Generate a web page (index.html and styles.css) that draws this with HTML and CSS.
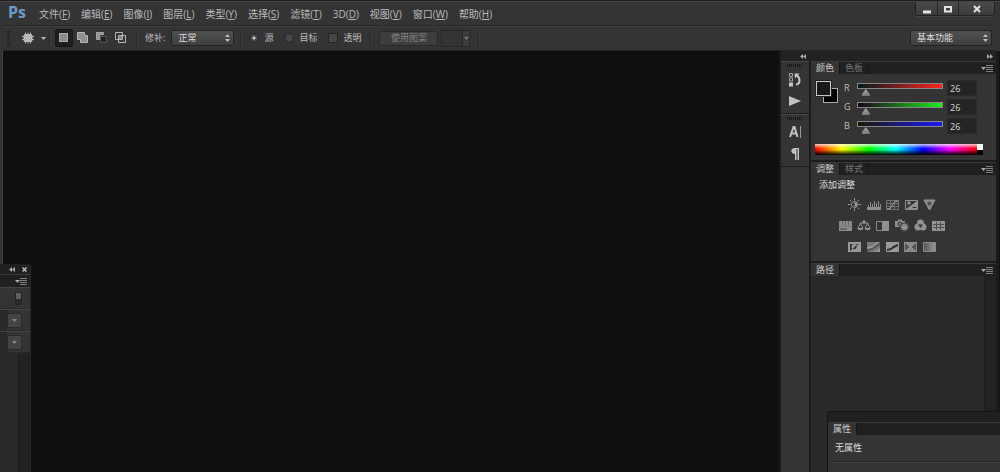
FILE: index.html
```html
<!DOCTYPE html>
<html lang="zh-CN">
<head>
<meta charset="utf-8">
<title>Ps</title>
<link rel="stylesheet" href="styles.css">
</head>
<body>
<div class="app">
  <header class="titlebar">
    <div class="logo">Ps</div>
    <nav class="menu">
      <a href="#">文件(<u>F</u>)</a>
      <a href="#">编辑(<u>E</u>)</a>
      <a href="#">图像(<u>I</u>)</a>
      <a href="#">图层(<u>L</u>)</a>
      <a href="#">类型(<u>Y</u>)</a>
      <a href="#">选择(<u>S</u>)</a>
      <a href="#">滤镜(<u>T</u>)</a>
      <a href="#">3D(<u>D</u>)</a>
      <a href="#">视图(<u>V</u>)</a>
      <a href="#">窗口(<u>W</u>)</a>
      <a href="#">帮助(<u>H</u>)</a>
    </nav>
    <div class="window-buttons">
      <button type="button" aria-label="最小化"><svg width="10" height="10"><path d="M1 6.500h8v3h-8z" fill="#e2e2e2"/></svg></button>
      <button type="button" aria-label="最大化"><svg width="10" height="10"><path d="M2 3h6v4.500h-6z" fill="none" stroke="#e2e2e2" stroke-width="2"/></svg></button>
      <button type="button" aria-label="关闭" class="close"><svg width="10" height="10"><path d="M2 2l6 6M8 2l-6 6" stroke="#e2e2e2" stroke-width="2"/></svg></button>
    </div>
  </header>

  <div class="options">
    <span class="grip-v"></span>
    <button type="button" class="icon-button tool" aria-label="修补工具">
      <svg width="14" height="12" viewBox="0 0 14 12"><rect x="2.500" y="2" width="9" height="8" rx="2" fill="#c4c4c4"/><path d="M4.500 .5v11M7 .5v11M9.500 .5v11M1 4.500h12M1 7.500h12" stroke="#b0b0b0"/></svg>
      <svg width="5" height="3"><path d="M0 0h5l-2.500 3z" fill="#bbb"/></svg>
    </button>
    <span class="separator"></span>
    <div class="modes">
      <button type="button" class="icon-button active" aria-label="新选区"><svg width="12" height="12"><rect x="1.500" y="1.500" width="8" height="8" fill="#8b8b8b" stroke="#aaa"/></svg></button>
      <button type="button" class="icon-button" aria-label="添加到选区"><svg width="12" height="12"><path d="M.5 .5h7v3h3v7h-7v-3h-3z" fill="#909090" stroke="#b5b5b5"/></svg></button>
      <button type="button" class="icon-button" aria-label="从选区减去"><svg width="12" height="12"><path d="M.5 .5h7v2h-4v5h-3z" fill="#909090" stroke="#a5a5a5"/><path d="M4.500 4.500h6v6h-6z" fill="#222" stroke="#555"/></svg></button>
      <button type="button" class="icon-button" aria-label="与选区交叉"><svg width="12" height="12"><path d="M.5 .5h7v7h-7zM3.500 3.500h7v7h-7z" fill="none" stroke="#b5b5b5"/><path d="M4 4h3v3h-3z" fill="#888"/></svg></button>
    </div>
    <span class="separator"></span>
    <label class="field">修补:
      <span class="select-wrap"><select><option>正常</option></select><svg width="5" height="8"><path d="M0 3l2.500-3 2.500 3zM0 5h5l-2.500 3z" fill="#bbb"/></svg></span>
    </label>
    <span class="separator"></span>
    <div class="choices">
      <label><input type="radio" name="patch" checked>源</label>
      <label><input type="radio" name="patch">目标</label>
      <label><input type="checkbox">透明</label>
    </div>
    <span class="separator"></span>
    <button type="button" class="pattern-button" disabled>使用图案</button>
    <button type="button" class="pattern-picker" aria-label="图案" disabled><svg width="5" height="3"><path d="M0 0h5l-2.500 3z" fill="#777"/></svg></button>
    <span class="separator"></span>
    <span class="select-wrap workspace-select"><select aria-label="工作区"><option>基本功能</option></select><svg width="5" height="8"><path d="M0 3l2.500-3 2.500 3zM0 5h5l-2.500 3z" fill="#bbb"/></svg></span>
  </div>

  <div class="workspace">
    <main class="canvas"></main>
    <aside class="dock">
      <div class="dock-header">
        <button type="button" class="icon-button" aria-label="展开面板"><svg width="6" height="5"><path d="M3 0v5l-3-2.500zM6 0v5l-3-2.500z" fill="#aaa"/></svg></button>
        <button type="button" class="icon-button" aria-label="折叠面板"><svg width="6" height="5"><path d="M0 0v5l3-2.500zM3 0v5l3-2.500z" fill="#aaa"/></svg></button>
      </div>
      <div class="dock-columns">
        <div class="rail">
          <div class="rail-group">
            <span class="grip-h"></span>
            <button type="button" class="icon-button" aria-label="历史记录"><svg width="14" height="15"><path d="M1.500 1.500h3v3h-3zM1.500 6h3v3h-3z" fill="none" stroke="#a6a6a6"/><path d="M1 10.500h4v4h-4z" fill="#c8c8c8"/><path d="M8 12.500c5-1 4-7 1-9" fill="none" stroke="#c8c8c8" stroke-width="2"/><path d="M6.500 1.500h5l-4.500 5z" fill="#c8c8c8"/></svg></button>
            <button type="button" class="icon-button" aria-label="动作"><svg width="14" height="12"><path d="M1 1l12 5-12 5z" fill="#c2c2c2"/></svg></button>
          </div>
          <div class="rail-group">
            <span class="grip-h"></span>
            <button type="button" class="icon-button" aria-label="字符"><svg width="14" height="14"><path d="M2 12l3.500-10h1l3 10M3 8.500h5.500" fill="none" stroke="#c2c2c2" stroke-width="2"/><path d="M12.500 1v12" stroke="#999"/></svg></button>
            <button type="button" class="icon-button" aria-label="段落"><svg width="14" height="14"><path d="M11 1v12h-1.500v-11h-1v11h-1.500v-6c-5 0-5-6 0-6z" fill="#c2c2c2"/></svg></button>
          </div>
        </div>
        <div class="panels">
          <section class="panel">
            <div class="tabs"><button type="button" class="tab current">颜色</button><button type="button" class="tab">色板</button>
              <button type="button" class="panel-menu" aria-label="面板菜单"><svg width="12" height="7"><path d="M0 2h5l-2.500 3z" fill="#aaa"/><path d="M5 .5h7M5 2.500h7M5 4.500h7M5 6.500h7" stroke="#808080"/></svg></button></div>
            <div class="panel-body color-body">
              <div class="color-main">
                <svg class="swatches" width="24" height="24"><rect x="8.500" y="8.500" width="14" height="14" fill="#000" stroke="#aaa"/><rect x=".5" y=".5" width="16" height="16" fill="#1a1a1a" stroke="#222"/><rect x="1.500" y="1.500" width="14" height="14" fill="#1a1a1a" stroke="#c8c8c8"/></svg>
                <div class="channels">
                  <div class="channel"><label for="red">R</label><input id="red" class="level" type="range" min="0" max="255" value="26"><input type="text" aria-label="R" value="26"></div>
                  <div class="channel"><label for="green">G</label><input id="green" class="level level-green" type="range" min="0" max="255" value="26"><input type="text" aria-label="G" value="26"></div>
                  <div class="channel"><label for="blue">B</label><input id="blue" class="level level-blue" type="range" min="0" max="255" value="26"><input type="text" aria-label="B" value="26"></div>
                </div>
              </div>
              <div class="spectrum"><span class="ramp"></span><span class="mono"></span></div>
            </div>
          </section>
          <section class="panel">
            <div class="tabs"><button type="button" class="tab current">调整</button><button type="button" class="tab">样式</button>
              <button type="button" class="panel-menu" aria-label="面板菜单"><svg width="12" height="7"><path d="M0 2h5l-2.500 3z" fill="#aaa"/><path d="M5 .5h7M5 2.500h7M5 4.500h7M5 6.500h7" stroke="#808080"/></svg></button></div>
            <div class="panel-body adjust-body">
              <div class="heading">添加调整</div>
              <div class="adjustments">
                <div class="adjust-row">
                  <button type="button" class="icon-button" aria-label="亮度/对比度"><svg width="13" height="13"><path d="M6.500 0v2.500M6.500 10.500v2.500M0 6.500h2.500M10.500 6.500h2.500M2 2l1.500 1.500M9.500 9.500l1.500 1.500M11 2l-1.500 1.500M2 11l1.500-1.500" stroke="#949494"/><circle cx="6.500" cy="6.500" r="3" fill="#333" stroke="#949494"/><path d="M6.500 4a2.500 2.500 0 0 1 0 5z" fill="#949494"/></svg></button>
                  <button type="button" class="icon-button" aria-label="色阶"><svg width="14" height="12"><path d="M0 8h14v3h-14z" fill="#8c8c8c"/><path d="M1.500 9v-3M3.500 9v-6M5.500 9v-4M7.500 9v-7M9.500 9v-5M11.500 9v-7M13.500 9v-4" stroke="#8c8c8c"/></svg></button>
                  <button type="button" class="icon-button" aria-label="曲线"><svg width="13" height="12"><path d="M.5 1.500h12v9h-12zM.5 4.500h12M.5 7.500h12M4.500 1v10M8.500 1v10" fill="none" stroke="#747474"/><path d="M1 10c7 0 4-8 11-8" fill="none" stroke="#aaa"/></svg></button>
                  <button type="button" class="icon-button" aria-label="曝光度"><svg width="13" height="12"><path d="M.5 1.500h12v9h-12z" fill="#333" stroke="#909090"/><path d="M1 10l11-8v8z" fill="#909090"/><path d="M2 4h4M4 2v4" stroke="#aaa"/><path d="M7.500 8.500h4" stroke="#333"/></svg></button>
                  <button type="button" class="icon-button" aria-label="自然饱和度"><svg width="13" height="12"><path d="M1 1h11l-5.500 10z" fill="#858585" stroke="#999"/><circle cx="6.500" cy="4.500" r="2" fill="#505050"/></svg></button>
                </div>
                <div class="adjust-row wide">
                  <button type="button" class="icon-button" aria-label="色相/饱和度"><svg width="13" height="12"><path d="M0 1h13v10h-13z" fill="#8c8c8c"/><path d="M3.500 1v4M6.500 1v4M9.500 1v4" stroke="#666"/><path d="M0 6h13" stroke="#777"/><path d="M1 8h7v2h-7z" fill="#666"/></svg></button>
                  <button type="button" class="icon-button" aria-label="色彩平衡"><svg width="14" height="12"><path d="M7 0v3M3 3h8M3.500 3l-2.500 5.500h5zM10.500 3l-2.500 5.500h5z" fill="none" stroke="#949494"/><path d="M.5 8h5.500c0 3-5.500 3-5.500 0zM8 8h5.500c0 3-5.500 3-5.500 0z" fill="#949494"/><circle cx="7" cy="2" r="1.500" fill="#949494"/></svg></button>
                  <button type="button" class="icon-button" aria-label="黑白"><svg width="13" height="12"><path d="M.5 1.500h12v9h-12z" fill="#333" stroke="#888"/><path d="M6 1h7v10h-7z" fill="#909090"/></svg></button>
                  <button type="button" class="icon-button" aria-label="照片滤镜"><svg width="14" height="13"><path d="M0 2h3v-1.500h4v1.500h3v6h-10z" fill="#8c8c8c"/><circle cx="5" cy="5" r="2" fill="#777" stroke="#333"/><circle cx="9.500" cy="8" r="4" fill="#858585" stroke="#444"/><path d="M7.500 8.500h4" stroke="#aaa"/></svg></button>
                  <button type="button" class="icon-button" aria-label="通道混合器"><svg width="13" height="13"><circle cx="6.500" cy="4" r="3.500" fill="#929292"/><circle cx="4" cy="8" r="3.500" fill="#929292"/><circle cx="9" cy="8" r="3.500" fill="#929292"/><path d="M6.500 9l-2.500-3.500h5z" fill="#333"/></svg></button>
                  <button type="button" class="icon-button" aria-label="颜色查找"><svg width="13" height="12"><path d="M0 1h13v10h-13z" fill="#929292"/><path d="M1 4.500h11M1 7.500h11M4.500 2v8M8.500 2v8" stroke="#505050"/></svg></button>
                </div>
                <div class="adjust-row">
                  <button type="button" class="icon-button" aria-label="反相"><svg width="13" height="12"><path d="M0 1h13v10h-13z" fill="#999"/><path d="M2 3h9l-9 7z" fill="#333"/><circle cx="6.500" cy="6" r="3" fill="#999"/><path d="M4.500 8a3 3 0 0 0 4-4z" fill="#333"/></svg></button>
                  <button type="button" class="icon-button" aria-label="色调分离"><svg width="13" height="12"><path d="M0 1h13v10h-13z" fill="#777"/><path d="M0 6l5-1 5-4h3v1l-5 4-8 3zM4 11l5-1 4-3v4z" fill="#999"/><path d="M0 8l5-1 8-6v3l-8 5-5 2z" fill="#555"/></svg></button>
                  <button type="button" class="icon-button" aria-label="阈值"><svg width="13" height="12"><path d="M0 1h13v10h-13z" fill="#999"/><path d="M1 8l4-1 2-2 5-2v2l-4 2-3 2-4 1z" fill="#292929"/></svg></button>
                  <button type="button" class="icon-button" aria-label="可选颜色"><svg width="13" height="12"><path d="M0 1h13v10h-13z" fill="#888"/><path d="M1 2v8l5-4zM12 2v8l-5-4z" fill="#555"/><path d="M1 1l11 10M12 1l-11 10" stroke="#999"/></svg></button>
                  <button type="button" class="icon-button" aria-label="渐变映射"><svg width="13" height="12"><defs><linearGradient id="fade"><stop stop-color="#555"/><stop offset="1" stop-color="#999"/></linearGradient></defs><path d="M.5 1.500h12v9h-12z" fill="url(#fade)" stroke="#888"/></svg></button>
                </div>
              </div>
            </div>
          </section>
          <section class="panel paths">
            <div class="tabs"><button type="button" class="tab current">路径</button>
              <button type="button" class="panel-menu" aria-label="面板菜单"><svg width="12" height="7"><path d="M0 2h5l-2.500 3z" fill="#aaa"/><path d="M5 .5h7M5 2.500h7M5 4.500h7M5 6.500h7" stroke="#808080"/></svg></button></div>
            <div class="paths-body"><span class="scroll-track"></span></div>
          </section>
        </div>
      </div>
    </aside>
  </div>

  <section class="float float-left">
    <div class="float-bar">
      <button type="button" class="icon-button" aria-label="折叠"><svg width="6" height="5"><path d="M3 0v5l-3-2.500zM6 0v5l-3-2.500z" fill="#aaa"/></svg></button>
      <button type="button" class="icon-button" aria-label="关闭"><svg width="5" height="5"><path d="M.5 .5l4 4M4.500 .5l-4 4" stroke="#bbb" stroke-width="1.500"/></svg></button>
    </div>
    <div class="tabs"><button type="button" class="panel-menu" aria-label="面板菜单"><svg width="12" height="7"><path d="M0 2h5l-2.500 3z" fill="#aaa"/><path d="M5 .5h7M5 2.500h7M5 4.500h7M5 6.500h7" stroke="#808080"/></svg></button></div>
    <div class="float-row toggle-row"><button type="button" class="toggle" aria-label="滤镜开关"></button></div>
    <div class="float-row"><button type="button" class="drop" aria-label="不透明度"><svg width="5" height="3"><path d="M0 0h5l-2.500 3z" fill="#888"/></svg></button></div>
    <div class="float-row"><button type="button" class="drop" aria-label="填充"><svg width="5" height="3"><path d="M0 0h5l-2.500 3z" fill="#888"/></svg></button></div>
    <div class="float-list"><span class="scroll-track"></span></div>
  </section>

  <section class="float float-properties">
    <div class="float-bar"></div>
    <div class="tabs"><button type="button" class="tab current">属性</button></div>
    <div class="property-title">无属性</div>
    <div class="property-body"></div>
  </section>
</div>
</body>
</html>
```
FILE: styles.css
```css
* { box-sizing: border-box; }

body {
  margin: 0;
  background: #0f0f0f;
  color: #bcbcbc;
  font: 9px/12px "Open Sans", "Noto Sans CJK SC", sans-serif;
}

button, input, select { font: inherit; color: inherit; margin: 0; padding: 0; }
button { border: 0; background: none; }
svg { display: block; flex: none; }
.icon-button { display: flex; align-items: center; justify-content: center; }

.app {
  position: relative;
  display: flex;
  flex-direction: column;
  min-height: 100vh;
  overflow: hidden;
  background: #343434;
  border-top: 1px solid #1c1c1c;
}

/* Title bar and menu */
.titlebar { display: flex; align-items: center; height: 24px; padding: 0 5px 0 8px; border-top: 1px solid #444; }
.logo { width: 31px; padding-bottom: 3px; font-size: 16px; line-height: 20px; font-weight: 700; color: #6c9bcb; }
.menu { display: flex; gap: 11px; flex: 1; font-size: 10px; }
.menu a { color: inherit; text-decoration: none; white-space: nowrap; }
.window-buttons { display: flex; align-self: flex-start; border: 1px solid #222; border-top: 0; border-radius: 0 0 3px 3px; box-shadow: 0 1px #444; }
.window-buttons button { display: flex; align-items: center; justify-content: center; width: 21px; height: 13px; background: linear-gradient(#4a4a4a, #3b3b3b); border-left: 1px solid #262626; }
.window-buttons button:first-child { border-left: 0; }
.window-buttons .close { width: 36px; }

/* Tool options */
.options { display: flex; align-items: center; height: 26px; margin: 0 3px; padding: 0 5px 0 4px; border-top: 1px solid #282828; border-bottom: 1px solid #242424; box-shadow: inset 0 1px #3d3d3d; }
.grip-v { width: 3px; height: 15px; margin-right: 11px; background: repeating-linear-gradient(#1f1f1f 0 1px, #343434 1px 2px); }
.tool { gap: 6px; margin-right: 3px; }
.separator { width: 2px; height: 18px; background: #2a2a2a; border-right: 1px solid #3c3c3c; }
.modes { display: flex; gap: 1px; margin: 0 6px 0 4px; }
.modes .icon-button { width: 18px; height: 18px; border-radius: 2px; }
.modes .active { background: #1e1e1e; border: 1px solid #191919; }
.field { display: flex; align-items: center; gap: 6px; margin: 0 6px 0 7px; }
.select-wrap { display: flex; align-items: center; width: 63px; height: 16px; padding-right: 3px; border: 1px solid #232323; border-radius: 2px; background: linear-gradient(#505050, #3f3f3f); }
.select-wrap select { flex: 1; min-width: 0; height: 14px; padding-left: 6px; border: 0; outline: 0; appearance: none; background: none; color: #ddd; }
.choices { display: flex; align-items: center; gap: 11px; margin: 0 9px 0 7px; }
.choices label { display: flex; align-items: center; gap: 5px; }
.choices input { width: 10px; height: 10px; appearance: none; background: #464646; border: 1px solid #232323; }
.choices input[type="radio"] { border-radius: 50%; }
.choices input[type="radio"]:checked { background: radial-gradient(circle, #ccc 0 1px, #464646 2px); }
.pattern-button { width: 59px; height: 15px; margin: 0 3px 0 7px; border: 1px solid #292929; border-radius: 2px; background: #3d3d3d; color: #858585; }
.pattern-picker { display: flex; align-items: center; justify-content: flex-end; width: 29px; height: 17px; margin-right: 8px; border: 1px solid #292929; background: linear-gradient(90deg, #343434 20px, #292929 20px 21px, #3d3d3d 21px); }
.workspace-select { width: 82px; margin-left: auto; }

/* Canvas and dock */
.workspace { display: flex; flex: 1; }
.canvas { flex: 1; margin-left: 2px; background: #0f0f0f; border-left: 1px solid #444; }
.dock { display: flex; flex-direction: column; width: 221px; padding: 0 3px 0 2px; background: #1b1b1b; border-right: 1px solid #111; }
.dock-header { display: flex; justify-content: space-between; align-items: center; height: 10px; padding: 0 3px 0 19px; background: #222; }
.dock-columns { display: flex; flex: 1; gap: 2px; }
.rail { width: 28px; background: #343434; }
.rail-group { display: flex; flex-direction: column; align-items: center; height: 53px; padding-top: 2px; border-top: 1px solid #484848; border-bottom: 1px solid #1c1c1c; }
.grip-h { width: 16px; height: 3px; margin-bottom: 1px; background: repeating-linear-gradient(90deg, #191919 0 1px, #343434 1px 2px); }
.rail-group .icon-button { width: 28px; height: 22px; }
.panels { display: flex; flex-direction: column; flex: 1; gap: 2px; min-width: 0; }
.tabs { display: flex; height: 13px; background: #202020; border-top: 1px solid #3a3a3a; }
.tab { min-width: 29px; padding: 0 5px; line-height: 12px; color: #777; border-right: 1px solid #171717; }
.tab.current { background: #343434; color: #ccc; }
.panel-menu { margin-left: auto; padding: 0 3px; }
.panel-body { height: 86px; background: #343434; }

/* Color panel */
.color-body { padding: 6px 19px 0 4px; }
.color-main { display: flex; justify-content: space-between; }
.channels { display: flex; flex-direction: column; gap: 3px; }
.channel { display: flex; align-items: flex-start; height: 16px; }
.channel label { width: 9px; line-height: 16px; }
.channel input[type="text"] { width: 30px; height: 16px; padding-left: 2px; background: #242424; border: 1px solid #2a2a2a; color: #ddd; outline: 0; }
.level {
  --hue: #f22;
  --dark: #001a1a;
  width: 94px;
  height: 13px;
  margin-top: 3px;
  appearance: none;
  background:
    linear-gradient(90deg, var(--dark), var(--hue)) center 1px / calc(100% - 10px) 4px no-repeat,
    linear-gradient(#888, #888) center 0 / calc(100% - 8px) 6px no-repeat;
}
.level-green { --hue: #1bee1b; --dark: #1a001a; }
.level-blue { --hue: #1a1aff; --dark: #1a1a00; }
.level::-webkit-slider-thumb {
  appearance: none;
  width: 8px;
  height: 7px;
  margin-top: 6px;
  background: linear-gradient(#aaa, #777);
  clip-path: polygon(50% 0, 100% 75%, 100% 100%, 0 100%, 0 75%);
}
.spectrum { display: flex; width: 168px; height: 11px; margin-top: 10px; }
.ramp { flex: 1; background: linear-gradient(rgba(255,255,255,.8), transparent 40% 50%, #000), linear-gradient(90deg, red, yellow, lime, cyan, blue, magenta, red); }
.mono { width: 6px; background: linear-gradient(#fff 50%, #000 50%); }

/* Adjustments panel */
.adjust-body { padding: 4px 8px; }
.heading { margin-bottom: 7px; color: #ddd; }
.adjustments { display: flex; flex-direction: column; align-items: center; gap: 8px; width: 106px; margin-left: 20px; }
.adjust-row { display: flex; justify-content: space-between; width: 88px; height: 13px; }
.adjust-row.wide { width: 106px; }

/* Paths panel */
.paths { display: flex; flex-direction: column; flex: 1; }
.paths-body, .float-list { display: flex; justify-content: flex-end; flex: 1; background: #292929; }
.scroll-track { width: 12px; background: #222; border-left: 1px solid #1e1e1e; }

/* Floating panels over the workspace */
.float { position: absolute; bottom: 0; display: flex; flex-direction: column; background: #343434; }
.float-bar { display: flex; justify-content: flex-end; align-items: center; gap: 7px; height: 10px; padding-right: 3px; background: #202020; }
.float-left { left: 0; width: 31px; height: 208px; border-right: 1px solid #292929; border-radius: 0 3px 0 0; overflow: hidden; }
.float-row { display: flex; justify-content: flex-end; align-items: center; height: 22px; padding-right: 8px; border-top: 1px solid #454545; border-bottom: 1px solid #292929; background: linear-gradient(90deg, #292929 7px, #343434 7px); }
.toggle-row { background: #343434; }
.toggle { width: 7px; height: 13px; background: linear-gradient(#606060 50%, #2a2a2a 50%); border: 1px solid #222; }
.drop { display: flex; align-items: center; justify-content: center; width: 15px; height: 15px; background: #444; border: 1px solid #292929; border-radius: 0 2px 2px 0; }
.float-properties { right: 0; width: 173px; height: 61px; border: 1px solid #151515; border-right: 0; border-bottom: 0; border-radius: 3px 0 0 0; overflow: hidden; }
.property-title { padding: 7px 7px 7px; color: #ddd; }
.property-body { flex: 1; border-top: 1px solid #292929; box-shadow: inset 0 1px #3d3d3d; }
```
